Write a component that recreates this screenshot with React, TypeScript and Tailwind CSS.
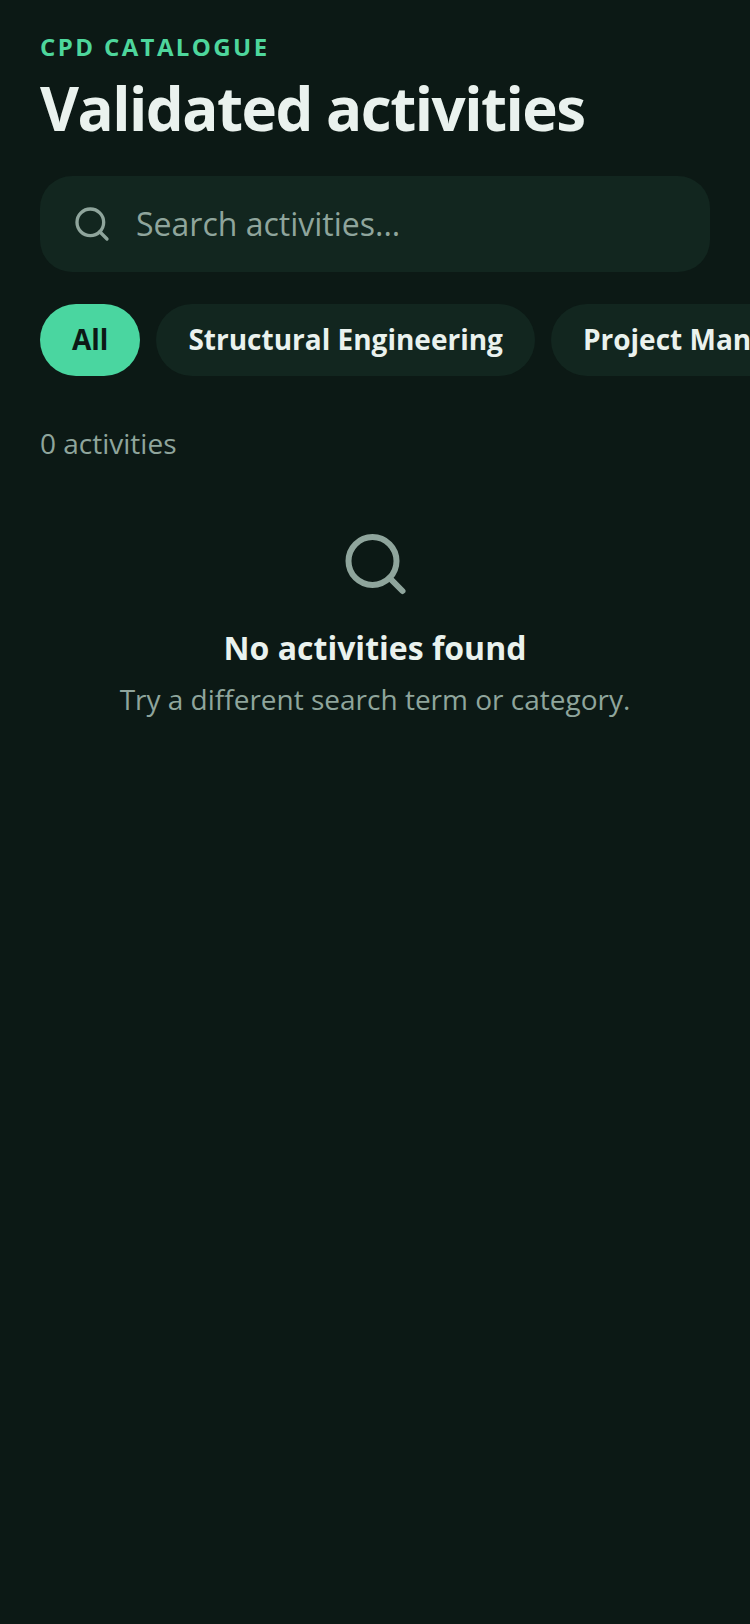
import React from 'react';
import { Search } from 'lucide-react';

const categories = ['All', 'Structural Engineering', 'Project Management'];

export default function App() {
  return (
    <div className="min-h-[1624px] bg-[#0c1915] font-['Open_Sans',sans-serif] overflow-hidden">
      <div className="pt-[31px] px-[40px]">
        <div className="text-[24px] leading-[32px] font-bold tracking-[2.4px] text-[#4ed69c]">CPD CATALOGUE</div>
        <h1 className="mt-[9px] text-[60px] leading-[72px] font-bold tracking-[-1.5px] text-[#eaf2ee]">Validated activities</h1>

        <div className="mt-[32px] h-[96px] rounded-[32px] bg-[#12261f] flex items-center px-[32px] gap-[24px]">
          <Search size={40} className="text-[#8fa59c]" />
          <span className="text-[32px] text-[#8fa59c]">Search activities...</span>
        </div>
      </div>

      <div className="mt-[32px] pl-[40px] flex gap-[16px]">
        {categories.map((c, i) => (
          <div
            key={c}
            className={`h-[72px] shrink-0 rounded-full px-[32px] pb-[2px] flex items-center text-[28px] font-bold whitespace-nowrap ${
              i === 0 ? 'bg-[#4ad6a0] text-[#0c1915]' : 'bg-[#12261f] text-[#eaf2ee]'
            }`}
          >
            {c}
          </div>
        ))}
      </div>

      <div className="mt-[45px] px-[40px] text-[28px] leading-[44px] text-[#8fa59c]">0 activities</div>

      <div className="mt-[63px] flex flex-col items-center">
        <Search size={72} className="text-[#8fa59c] translate-x-[0.5px]" />
        <div className="mt-[24px] text-[32px] leading-[48px] font-bold text-[#eaf2ee]">No activities found</div>
        <div className="mt-[5px] text-[28px] leading-[44px] text-[#8fa59c]">Try a different search term or category.</div>
      </div>
    </div>
  );
}
